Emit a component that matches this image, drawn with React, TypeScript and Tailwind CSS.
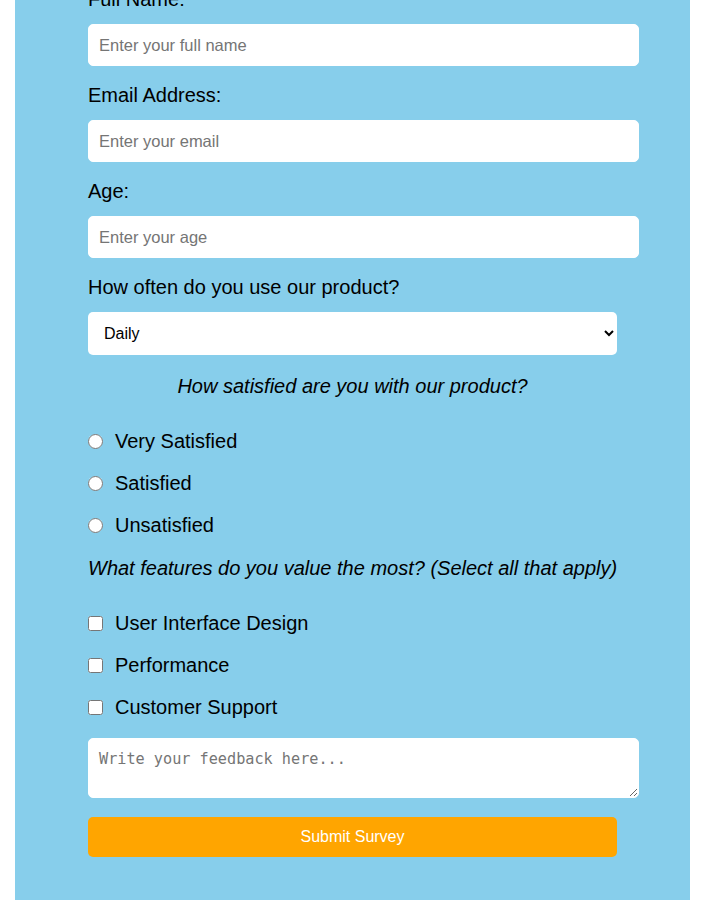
const fields = [
  { label: "Full Name:", placeholder: "Enter your full name", type: "text" },
  { label: "Email Address:", placeholder: "Enter your email", type: "email" },
  { label: "Age:", placeholder: "Enter your age", type: "number" },
];

const ratings = ["Very Satisfied", "Satisfied", "Unsatisfied"];
const features = ["User Interface Design", "Performance", "Customer Support"];

export default function App() {
  return (
    <div className="min-h-[906px] bg-white font-['Liberation_Sans',Arial,sans-serif] text-black">
      <form className="ml-[15px] -mt-[12px] w-[675px] bg-[#87CEEB] px-[73px] pb-[43px]">
        {fields.map((f) => (
          <div key={f.label} className="mb-[18px]">
            <label className="block h-[23px] text-[20px] leading-[23px] mb-[13px]">{f.label}</label>
            <input
              type={f.type}
              placeholder={f.placeholder}
              className="block h-[42px] w-[551px] rounded-[5px] border border-white bg-white px-[10px] text-[16.5px] placeholder:text-[#757575] outline-none"
            />
          </div>
        ))}

        <label className="block h-[23px] text-[20px] leading-[23px] mb-[13px]">How often do you use our product?</label>
        <select className="block h-[43px] w-[529px] rounded-[5px] bg-white pl-[12px] pr-[6px] text-[16px] text-black">
          <option>Daily</option>
          <option>Weekly</option>
          <option>Monthly</option>
          <option>Rarely</option>
        </select>

        <p className="mt-[20px] mb-[22px] h-[23px] w-[529px] text-center text-[20px] italic leading-[23px]">
          How satisfied are you with our product?
        </p>
        {ratings.map((r) => (
          <label key={r} className="flex h-[42px] items-center gap-[12px] text-[20px]">
            <input type="radio" name="satisfaction" className="h-[15px] w-[15px]" />
            {r}
          </label>
        ))}

        <p className="mt-[11px] mb-[22px] h-[23px] w-[529px] text-center text-[20px] italic leading-[23px] whitespace-nowrap">
          What features do you value the most? (Select all that apply)
        </p>
        {features.map((f) => (
          <label key={f} className="flex h-[42px] items-center gap-[12px] text-[20px]">
            <input type="checkbox" className="h-[15px] w-[15px]" />
            {f}
          </label>
        ))}

        <textarea
          placeholder="Write your feedback here..."
          className="mt-[10px] block h-[60px] w-[551px] rounded-[5px] border border-white bg-white px-[10px] pt-[9px] font-['DejaVu_Sans_Mono',monospace] text-[15.2px] placeholder:text-[#757575] outline-none"
        />

        <button
          type="button"
          className="mt-[19px] block h-[40px] w-[529px] rounded-[5px] bg-[#FFA500] text-[16px] text-white"
        >
          Submit Survey
        </button>
      </form>
    </div>
  );
}
